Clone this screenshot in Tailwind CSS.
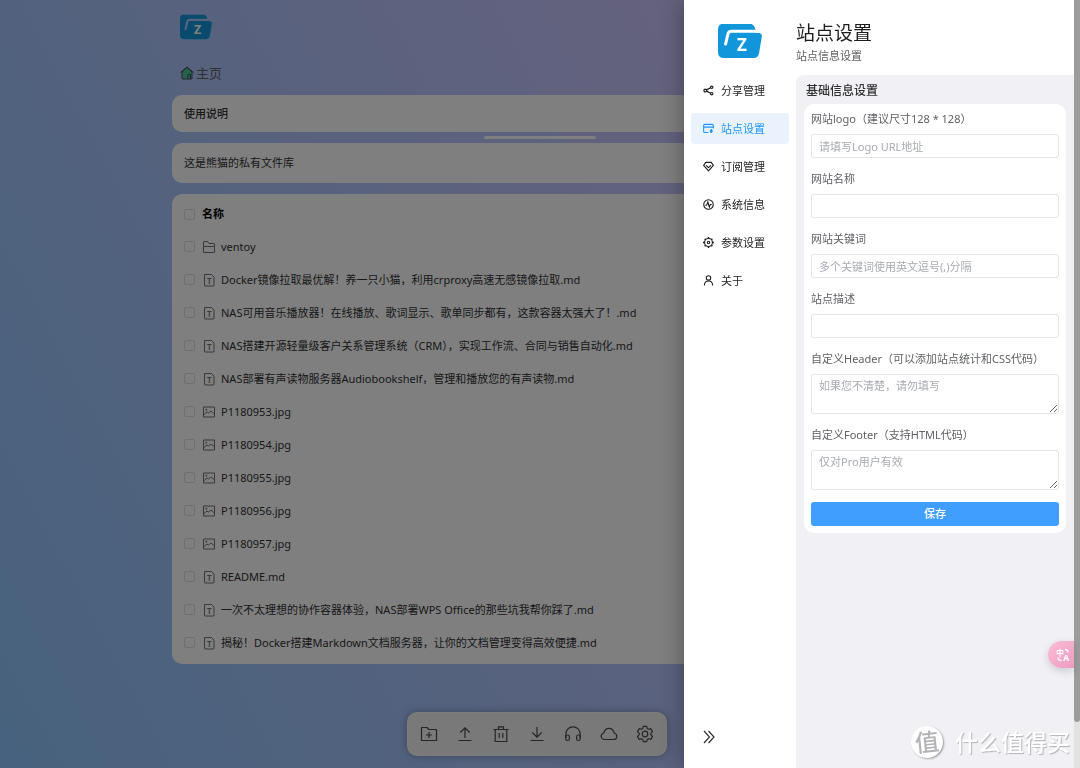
<!DOCTYPE html>
<html lang="zh-CN">
  <head>
    <title>站点设置</title>
    <meta charset="utf-8" />
    <meta name="viewport" content="width=device-width, initial-scale=1.0" />
    <script src="https://cdn.jsdelivr.net/npm/@tailwindcss/browser@4"></script>
  </head>
  <body
    class="h-screen overflow-hidden bg-[linear-gradient(62deg,#8ec5fc_0%,#e0c3fc_100%)] font-['Noto_Sans','Noto_Sans_CJK_SC',sans-serif] text-[11px] leading-4 text-[#303133]"
  >
    <!-- shared icons -->
    <svg class="absolute size-0" aria-hidden="true">
      <mask id="logo-cut" maskUnits="userSpaceOnUse" x="0" y="0" width="44" height="36">
        <rect width="44" height="36" fill="#fff" />
        <path d="M7.6 20.5 9.8 11Q10.5 7.8 13.5 7.8H45" fill="none" stroke="#000" stroke-width="3" stroke-linecap="round" />
      </mask>
      <symbol id="logo" viewBox="0 0 44 35">
        <path
          mask="url(#logo-cut)"
          fill="#1296db"
          d="M6 0H31Q36.500 .5 37.500 6.300V9.200H40Q44.500 9.500 43.700 14L41 30Q40 34.500 35.500 34.500H6Q0 34.500 0 28.500V6Q0 0 6 0Z"
        />
        <text x="24" y="27" text-anchor="middle" font-size="17" font-weight="700" fill="#fff">Z</text>
      </symbol>
      <symbol id="folder" viewBox="0 0 14 14" fill="none" stroke="currentColor" stroke-linejoin="round">
        <path d="M1.500 12.500V2Q1.500 1.500 2 1.500H5.500L7 3.500H12Q12.500 3.500 12.500 4V12Q12.500 12.500 12 12.500ZM1.500 6.500H12.500" />
      </symbol>
      <symbol id="text-file" viewBox="0 0 14 14">
        <path d="M2.500 1.500H9.500L12 4V12.500Q12 13 11.500 13H3Q2.500 13 2.500 12.500Z" fill="none" stroke="currentColor" stroke-linejoin="round" />
        <text x="7.250" y="10.500" text-anchor="middle" font-size="8" font-weight="600" fill="currentColor">T</text>
      </symbol>
      <symbol id="image" viewBox="0 0 14 14" fill="none" stroke="currentColor" stroke-linejoin="round">
        <path d="M1.500 2H12.500V12H1.500ZM2 9.500 5 7 6.500 8 9 6 12.500 9" />
        <circle cx="4.300" cy="4.700" r=".6" />
      </symbol>
    </svg>

    <main class="mx-auto max-w-[736px]">
      <header class="px-2 pt-3.5">
        <svg class="h-[26px] w-8" aria-label="logo"><use href="#logo" /></svg>
      </header>
      <nav class="mt-[23px] h-5 px-2">
        <a href="#" class="inline-flex items-center gap-0.5 text-[13px] leading-5 text-[#606266]">
          <svg class="size-3.5" viewBox="0 0 14 14" fill="none" stroke="#41505a">
            <path d="M2 6V12.500Q2 13 2.500 13H11.500Q12 13 12 12.500V6L7 1.500Z" fill="#4fc59d" />
            <path d="M.5 6.500 7 1 13.500 6.500M8 13V8.500H10.500V13" stroke-linejoin="round" />
          </svg>
          主页
        </a>
      </nav>
      <section class="mt-3 flex h-[37px] items-center rounded-[10px] bg-white px-3 font-medium">使用说明</section>
      <div class="mx-auto my-1 h-[3px] w-28 rounded-full bg-white"></div>
      <section class="flex h-10 items-center rounded-[10px] bg-white px-3">这是熊猫的私有文件库</section>
      <section class="mt-[11px] rounded-[10px] bg-white px-3 pt-1 pb-[5px]">
        <table class="w-full text-left text-[#303133]">
          <thead>
            <tr class="h-8 text-black">
              <th class="w-[18px]"><input type="checkbox" aria-label="全选" class="block size-[11px] appearance-none rounded-[2px] border border-[#dcdfe6]" /></th>
              <th colspan="2" class="font-bold">名称</th>
            </tr>
          </thead>
          <tbody>
            <tr class="h-[33px]">
              <td><input type="checkbox" aria-label="选择" class="block size-[11px] appearance-none rounded-[2px] border border-[#dcdfe6]" /></td>
              <td class="w-[19px]"><svg class="size-3.5 text-[#707278]"><use href="#folder" /></svg></td>
              <td>ventoy</td>
            </tr>
            <tr class="h-[33px]">
              <td><input type="checkbox" aria-label="选择" class="block size-[11px] appearance-none rounded-[2px] border border-[#dcdfe6]" /></td>
              <td><svg class="size-3.5 text-[#707278]"><use href="#text-file" /></svg></td>
              <td>Docker镜像拉取最优解！养一只小猫，利用crproxy高速无感镜像拉取.md</td>
            </tr>
            <tr class="h-[33px]">
              <td><input type="checkbox" aria-label="选择" class="block size-[11px] appearance-none rounded-[2px] border border-[#dcdfe6]" /></td>
              <td><svg class="size-3.5 text-[#707278]"><use href="#text-file" /></svg></td>
              <td>NAS可用音乐播放器！在线播放、歌词显示、歌单同步都有，这款容器太强大了！.md</td>
            </tr>
            <tr class="h-[33px]">
              <td><input type="checkbox" aria-label="选择" class="block size-[11px] appearance-none rounded-[2px] border border-[#dcdfe6]" /></td>
              <td><svg class="size-3.5 text-[#707278]"><use href="#text-file" /></svg></td>
              <td>NAS搭建开源轻量级客户关系管理系统（CRM），实现工作流、合同与销售自动化.md</td>
            </tr>
            <tr class="h-[33px]">
              <td><input type="checkbox" aria-label="选择" class="block size-[11px] appearance-none rounded-[2px] border border-[#dcdfe6]" /></td>
              <td><svg class="size-3.5 text-[#707278]"><use href="#text-file" /></svg></td>
              <td>NAS部署有声读物服务器Audiobookshelf，管理和播放您的有声读物.md</td>
            </tr>
            <tr class="h-[33px]">
              <td><input type="checkbox" aria-label="选择" class="block size-[11px] appearance-none rounded-[2px] border border-[#dcdfe6]" /></td>
              <td><svg class="size-3.5 text-[#707278]"><use href="#image" /></svg></td>
              <td>P1180953.jpg</td>
            </tr>
            <tr class="h-[33px]">
              <td><input type="checkbox" aria-label="选择" class="block size-[11px] appearance-none rounded-[2px] border border-[#dcdfe6]" /></td>
              <td><svg class="size-3.5 text-[#707278]"><use href="#image" /></svg></td>
              <td>P1180954.jpg</td>
            </tr>
            <tr class="h-[33px]">
              <td><input type="checkbox" aria-label="选择" class="block size-[11px] appearance-none rounded-[2px] border border-[#dcdfe6]" /></td>
              <td><svg class="size-3.5 text-[#707278]"><use href="#image" /></svg></td>
              <td>P1180955.jpg</td>
            </tr>
            <tr class="h-[33px]">
              <td><input type="checkbox" aria-label="选择" class="block size-[11px] appearance-none rounded-[2px] border border-[#dcdfe6]" /></td>
              <td><svg class="size-3.5 text-[#707278]"><use href="#image" /></svg></td>
              <td>P1180956.jpg</td>
            </tr>
            <tr class="h-[33px]">
              <td><input type="checkbox" aria-label="选择" class="block size-[11px] appearance-none rounded-[2px] border border-[#dcdfe6]" /></td>
              <td><svg class="size-3.5 text-[#707278]"><use href="#image" /></svg></td>
              <td>P1180957.jpg</td>
            </tr>
            <tr class="h-[33px]">
              <td><input type="checkbox" aria-label="选择" class="block size-[11px] appearance-none rounded-[2px] border border-[#dcdfe6]" /></td>
              <td><svg class="size-3.5 text-[#707278]"><use href="#text-file" /></svg></td>
              <td>README.md</td>
            </tr>
            <tr class="h-[33px]">
              <td><input type="checkbox" aria-label="选择" class="block size-[11px] appearance-none rounded-[2px] border border-[#dcdfe6]" /></td>
              <td><svg class="size-3.5 text-[#707278]"><use href="#text-file" /></svg></td>
              <td>一次不太理想的协作容器体验，NAS部署WPS Office的那些坑我帮你踩了.md</td>
            </tr>
            <tr class="h-[33px]">
              <td><input type="checkbox" aria-label="选择" class="block size-[11px] appearance-none rounded-[2px] border border-[#dcdfe6]" /></td>
              <td><svg class="size-3.5 text-[#707278]"><use href="#text-file" /></svg></td>
              <td>揭秘！Docker搭建Markdown文档服务器，让你的文档管理变得高效便捷.md</td>
            </tr>
          </tbody>
        </table>
      </section>
    </main>

    <!-- bottom toolbar -->
    <div class="fixed inset-x-0 bottom-3 flex justify-center pr-1.5">
      <div class="flex h-11 items-center gap-[18px] rounded-[10px] border border-white/60 bg-[#f2f2f2] px-3 text-[#484a4e] shadow-[0_0_8px_rgba(0,0,0,0.3)]">
        <button type="button" aria-label="新建文件夹">
          <svg class="size-[18px]" viewBox="0 0 18 18" fill="none" stroke="currentColor" stroke-width="1.200">
            <path d="M1.500 2.500H7L8.800 4.500H16.500V15.500H1.500ZM9 7V13M6 10H12" stroke-linejoin="round" />
          </svg>
        </button>
        <button type="button" aria-label="上传">
          <svg class="size-[18px]" viewBox="0 0 18 18" fill="none" stroke="currentColor" stroke-width="1.200">
            <path d="M9 13V3M4.300 7.500 9 2.800 13.700 7.500M2.500 15.500H15.500" />
          </svg>
        </button>
        <button type="button" aria-label="删除">
          <svg class="size-[18px]" viewBox="0 0 18 18" fill="none" stroke="currentColor" stroke-width="1.200">
            <path d="M1.500 4.500H16.500M3.200 4.500V16.500H14.800V4.500M6.500 4.500V1.800H11.500V4.500M7.200 8V13M10.800 8V13" />
          </svg>
        </button>
        <button type="button" aria-label="下载">
          <svg class="size-[18px]" viewBox="0 0 18 18" fill="none" stroke="currentColor" stroke-width="1.200">
            <path d="M9 2V12M4.300 7.500 9 12.200 13.700 7.500M2.500 15.500H15.500" />
          </svg>
        </button>
        <button type="button" aria-label="音乐">
          <svg class="size-[18px]" viewBox="0 0 18 18" fill="none" stroke="currentColor" stroke-width="1.200">
            <path d="M1.800 13V9A7.200 7.200 0 0 1 16.200 9V13" />
            <rect x="1.800" y="10" width="3.600" height="5.500" rx="1.800" />
            <rect x="12.600" y="10" width="3.600" height="5.500" rx="1.800" />
          </svg>
        </button>
        <button type="button" aria-label="云存储">
          <svg class="size-[18px]" viewBox="0 0 18 18" fill="none" stroke="currentColor" stroke-width="1.200">
            <path d="M4.800 14.500C2.500 14.500 1.200 13 1.200 11.200 1.200 9.500 2.400 8.500 3.800 8 4.500 5 6.500 3.300 9 3.300S13.500 5 14.200 8C15.600 8.500 16.800 9.500 16.800 11.200 16.800 13 15.500 14.500 13.200 14.500Z" />
          </svg>
        </button>
        <button type="button" aria-label="设置">
          <svg class="size-[18px]" viewBox="0 0 18 18" fill="none" stroke="currentColor" stroke-width="1.200" stroke-linejoin="round">
            <path d="M7.300 1.300H10.700L11.300 3.600 12.500 4.300 14.800 3.600 16.500 6.600 14.800 8.300V9.700L16.500 11.400 14.800 14.400 12.500 13.700 11.300 14.400 10.700 16.700H7.300L6.700 14.400 5.500 13.700 3.200 14.400 1.500 11.400 3.200 9.700V8.300L1.500 6.600 3.200 3.600 5.500 4.300 6.700 3.600Z" />
            <circle cx="9" cy="9" r="2.800" />
          </svg>
        </button>
      </div>
    </div>

    <div class="fixed inset-0 bg-black/50"></div>

    <!-- settings drawer -->
    <aside class="fixed inset-y-0 right-0 flex w-[396px] bg-white shadow-[-4px_0_20px_rgba(0,0,0,0.25)]">
      <div class="flex w-28 flex-col px-[7px] pt-[23px]">
        <svg class="h-9 w-11 self-center" aria-label="logo"><use href="#logo" /></svg>
        <nav class="mt-4 flex flex-col gap-[7px] text-[#1d1e1f]">
          <a href="#" class="flex h-[31px] items-center gap-[7px] rounded px-3">
            <svg class="size-[11px]" viewBox="0 0 12 12" fill="none" stroke="currentColor" stroke-width="1.300">
              <circle cx="2.500" cy="6" r="1.500" /><circle cx="9.500" cy="2.500" r="1.300" /><circle cx="9.500" cy="9.500" r="1.300" />
              <path d="M3.900 5.300 8.300 3.100M3.900 6.700 8.300 8.900" />
            </svg>
            分享管理
          </a>
          <a href="#" class="flex h-[31px] items-center gap-[7px] rounded bg-[#eaf3fd] px-3 text-[#1e96fa]">
            <svg class="size-[11px]" viewBox="0 0 12 12" fill="none" stroke="currentColor" stroke-width="1.200">
              <path d="M6 10.400H2Q.7 10.400 .7 9.200V2.700Q.7 1.500 2 1.500H10Q11.300 1.500 11.300 2.700V6M.7 4.500H11.300" />
              <circle cx="9" cy="8.700" r="1.700" fill="currentColor" stroke="none" />
              <path d="M9 6.500V11" />
            </svg>
            站点设置
          </a>
          <a href="#" class="flex h-[31px] items-center gap-[7px] rounded px-3">
            <svg class="size-[11px]" viewBox="0 0 12 12" fill="none" stroke="currentColor" stroke-width="1.200" stroke-linejoin="round">
              <path d="M3 1.500H9L11.300 4.700 6 10.700 .7 4.700ZM3.300 4.700 6 7.300 8.700 4.700" />
            </svg>
            订阅管理
          </a>
          <a href="#" class="flex h-[31px] items-center gap-[7px] rounded px-3">
            <svg class="size-[11px]" viewBox="0 0 12 12" fill="none" stroke="currentColor" stroke-width="1.200">
              <circle cx="6" cy="6" r="5.200" /><path d="M2.500 6.800H4L5.300 3.300 6.900 8.700 8 6H9.500" />
            </svg>
            系统信息
          </a>
          <a href="#" class="flex h-[31px] items-center gap-[7px] rounded px-3">
            <svg class="size-[11px]" viewBox="0 0 12 12" fill="none" stroke="currentColor" stroke-width="1.200">
              <circle cx="6" cy="6" r="4.300" /><circle cx="6" cy="6" r="1.300" />
              <path d="M6 0V1.700M6 10.300V12M0 6H1.700M10.300 6H12M1.800 1.800 3 3M9 9 10.200 10.200M1.800 10.200 3 9M9 3 10.200 1.800" stroke-width="1.600" />
            </svg>
            参数设置
          </a>
          <a href="#" class="flex h-[31px] items-center gap-[7px] rounded px-3">
            <svg class="size-[11px]" viewBox="0 0 12 12" fill="none" stroke="currentColor" stroke-width="1.200">
              <circle cx="6" cy="3.200" r="2.400" /><path d="M1.500 11.500C1.500 8.500 3.500 6.500 6 6.500S10.500 8.500 10.500 11.500" />
            </svg>
            关于
          </a>
        </nav>
        <button type="button" aria-label="收起" class="mt-auto mb-6 ml-3 self-start text-[#303133]">
          <svg class="size-3.5" viewBox="0 0 14 14" fill="none" stroke="currentColor" stroke-width="1.200">
            <path d="M1 1 6.500 7 1 13M5.500 1 11 7 5.500 13" />
          </svg>
        </button>
      </div>

      <div class="flex flex-1 flex-col">
        <h1 class="mt-5 text-[19px] leading-[26px] text-[#1d1e1f]">站点设置</h1>
        <p class="mt-0.5 mb-[11px] text-[#606266]">站点信息设置</p>
        <div class="flex-1 rounded-tl-lg bg-[#f0f0f5] px-2 pt-0.5">
          <h2 class="px-0.5 text-xs leading-[27px] font-medium text-[#303133]">基础信息设置</h2>
          <form class="flex flex-col rounded-[10px] bg-white px-[7px] pb-[7px] text-[#606266]">
            <label for="logo-url" class="leading-[30px]">网站logo（建议尺寸128 * 128）</label>
            <input id="logo-url" type="text" placeholder="请填写Logo URL地址" class="h-6 rounded-[3px] border border-[#e2e4ea] px-[7px] placeholder:text-[#a8abb2]" />
            <label for="site-name" class="mt-1.5 leading-[30px]">网站名称</label>
            <input id="site-name" type="text" class="h-6 rounded-[3px] border border-[#e2e4ea] px-[7px]" />
            <label for="keywords" class="mt-1.5 leading-[30px]">网站关键词</label>
            <input id="keywords" type="text" placeholder="多个关键词使用英文逗号(,)分隔" class="h-6 rounded-[3px] border border-[#e2e4ea] px-[7px] placeholder:text-[#a8abb2]" />
            <label for="description" class="mt-1.5 leading-[30px]">站点描述</label>
            <input id="description" type="text" class="h-6 rounded-[3px] border border-[#e2e4ea] px-[7px]" />
            <label for="custom-header" class="mt-1.5 leading-[30px]">自定义Header（可以添加站点统计和CSS代码）</label>
            <textarea id="custom-header" placeholder="如果您不清楚，请勿填写" class="h-10 rounded-[3px] border border-[#e2e4ea] px-[7px] py-[3px] placeholder:text-[#a8abb2]"></textarea>
            <label for="custom-footer" class="mt-1.5 leading-[30px]">自定义Footer（支持HTML代码）</label>
            <textarea id="custom-footer" placeholder="仅对Pro用户有效" class="h-10 rounded-[3px] border border-[#e2e4ea] px-[7px] py-[3px] placeholder:text-[#a8abb2]"></textarea>
            <button type="submit" class="mt-3 h-6 rounded-[3px] bg-[#409eff] font-medium text-white">保存</button>
          </form>
        </div>
      </div>

      <!-- scrollbar -->
      <div class="w-1.5 bg-[#e2e2e2]">
        <div class="h-[94%] rounded-b-full bg-[#9c9c9c]"></div>
      </div>
    </aside>

    <!-- translate button -->
    <button
      type="button"
      aria-label="翻译"
      class="fixed right-1.5 bottom-[100px] flex h-[27px] w-[26px] items-center justify-center rounded-l-full bg-linear-to-br from-[#f9bdd6] to-[#ee9cc1] pl-1 text-white shadow-[0_3px_8px_rgba(0,0,0,0.15)]"
    >
      <svg class="size-3.5" viewBox="0 0 14 14" fill="currentColor">
        <text x="0" y="7.500" font-size="8" font-weight="700">中</text>
        <text x="7" y="13" font-size="9" font-weight="700">A</text>
        <path d="M9 1.500Q12 1.500 12 4.500M2 9.500Q2 12.500 5.500 12.500" fill="none" stroke="currentColor" stroke-width="1.300" />
      </svg>
    </button>

    <!-- watermark -->
    <div class="fixed right-2.5 bottom-2.5 flex items-center gap-3 text-[23px] leading-8 text-white">
      <span class="flex size-8 -rotate-6 items-center justify-center rounded-full bg-white text-2xl font-medium text-[#b4b4b8] shadow-[1px_1px_2px_rgba(0,0,0,0.35)]">值</span>
      <span class="font-medium [text-shadow:1px_1px_1px_rgba(0,0,0,0.25)]">什么值得买</span>
    </div>
  </body>
</html>
